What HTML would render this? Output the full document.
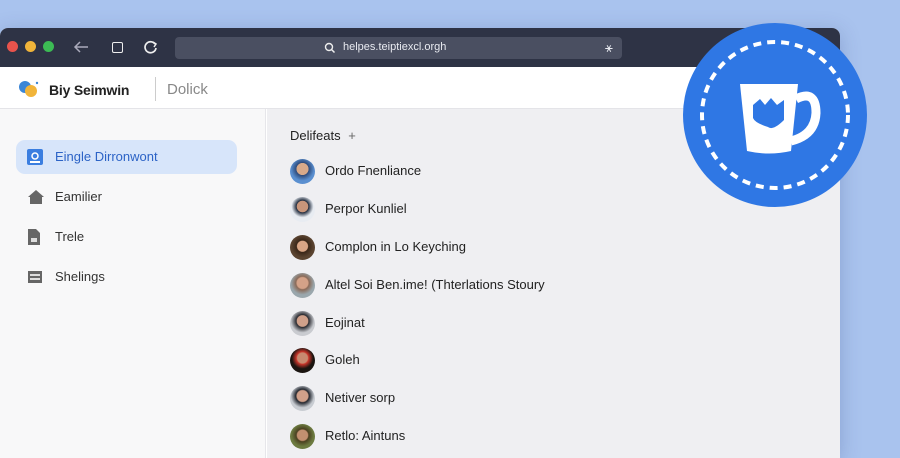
<!DOCTYPE html>
<html><head><style>
*{margin:0;padding:0;box-sizing:border-box}
body{width:900px;height:450px;overflow:hidden;background:#a9c3ee;font-family:"Liberation Sans",sans-serif;position:relative}
.win{position:absolute;left:0;top:28px;width:840px;height:430px;border-radius:8px 8px 0 0;overflow:hidden;background:#fff;box-shadow:0 4px 20px rgba(40,60,120,.25)}
.tb{position:absolute;left:0;top:0;width:840px;height:39px;background:#2e3345}
.dot{position:absolute;top:13px;width:11px;height:11px;border-radius:50%}
.url{position:absolute;left:175px;top:9px;width:447px;height:22px;border-radius:4px;background:#4a4f61;color:#e8eaf0;font-size:11px}
.hdr{position:absolute;left:0;top:39px;width:840px;height:42px;background:#fff;border-bottom:1px solid #e4e4e8}
.side{position:absolute;left:0;top:81px;width:266px;height:360px;background:#f8f8f9;border-right:1px solid #e6e6ea}
.main{position:absolute;left:267px;top:81px;width:573px;height:360px;background:#efeff2}
.nav{position:absolute;left:16px;width:221px;height:34px;border-radius:9px;font-size:13px;color:#333;line-height:34px;padding-left:39px}
.nav svg{position:absolute;left:11px;top:9px}
.row{position:absolute;left:23px;font-size:13px;color:#222;line-height:24px;height:24px}
.av{position:absolute;left:0;top:0;width:25px;height:25px;border-radius:50%;overflow:hidden}
.row span{position:absolute;left:35px;white-space:nowrap}
.badge{position:absolute;left:683px;top:23px;width:184px;height:184px;border-radius:50%;background:#2f77e4}
</style></head><body>
<div class="win">
 <div class="tb">
  <div class="dot" style="left:7px;background:#e9534c"></div>
  <div class="dot" style="left:25px;background:#f0b43a"></div>
  <div class="dot" style="left:43px;background:#3cbb54"></div>
  <svg style="position:absolute;left:73px;top:12px" width="16" height="14"><path d="M15 7H2M7 2L2 7l5 5" stroke="#aab" stroke-width="1.5" fill="none"/></svg>
  <div style="position:absolute;left:112px;top:14px;width:11px;height:11px;border:1.6px solid #eee;border-radius:2px"></div>
  <svg style="position:absolute;left:143px;top:12px" width="15" height="15"><path d="M12 4A5.5 5.5 0 1 0 13 8" stroke="#eee" stroke-width="1.7" fill="none"/><path d="M10 2l3 2-2 3" stroke="#eee" stroke-width="1.5" fill="none"/></svg>
  <div class="url">
   <svg style="position:absolute;left:149px;top:5px" width="12" height="12"><circle cx="5" cy="5" r="3.5" stroke="#eee" stroke-width="1.4" fill="none"/><path d="M7.5 7.5l3 3" stroke="#eee" stroke-width="1.5"/></svg>
   <span style="position:absolute;left:168px;top:4px">helpes.teiptiexcl.orgh</span>
   <span style="position:absolute;left:430px;top:3px;font-size:13px">⚹</span>
  </div>
 </div>
 <div class="hdr">
  <svg style="position:absolute;left:17px;top:12px" width="24" height="20"><circle cx="8" cy="8" r="6" fill="#3b86d6"/><circle cx="14" cy="12" r="6" fill="#f1b43a"/><circle cx="20" cy="4" r="1.2" fill="#3b86d6"/></svg>
  <span style="position:absolute;left:49px;top:15px;font-size:14px;font-weight:bold;color:#222;letter-spacing:-.2px">Biy Seimwin</span>
  <div style="position:absolute;left:155px;top:10px;width:1px;height:24px;background:#ccc"></div>
  <span style="position:absolute;left:167px;top:14px;font-size:15px;color:#888">Dolick</span>
 </div>
 <div class="side">
  <div class="nav" style="top:31px;background:#d7e5fa;color:#2c63c6">
   <svg width="16" height="16"><rect width="16" height="16" rx="2" fill="#3a7ee0"/><circle cx="8" cy="7" r="3" fill="none" stroke="#fff" stroke-width="1.5"/><path d="M3 13h10" stroke="#fff" stroke-width="2"/></svg>Eingle Dirronwont</div>
  <div class="nav" style="top:71px"><svg width="18" height="16"><path d="M9 1L1 8h2v7h12V8h2z" fill="#666"/></svg>Eamilier</div>
  <div class="nav" style="top:111px"><svg width="14" height="16"><path d="M1 0h8l4 4v12H1z" fill="#666"/><rect x="4" y="9" width="6" height="4" fill="#ddd"/></svg>Trele</div>
  <div class="nav" style="top:151px"><svg width="16" height="16"><rect x="1" y="2" width="14" height="12" fill="#666"/><rect x="3" y="5" width="10" height="2" fill="#ddd"/><rect x="3" y="9" width="10" height="2" fill="#ddd"/></svg>Shelings</div>
 </div>
 <div class="main">
  <span style="position:absolute;left:23px;top:19px;font-size:13px;color:#222">Delifeats <span style="color:#666;margin-left:4px">+</span></span>
  <div class="row" style="top:50px"><div class="av" style="background:radial-gradient(circle at 50% 40%,#d7a98a 30%,#2e4a7a 32%,#5a8fd0 60%)"></div><span>Ordo Fnenliance</span></div>
  <div class="row" style="top:88px"><div class="av" style="background:radial-gradient(circle at 50% 38%,#c8957a 28%,#1f2a3c 30%,#e8ecf2 55%)"></div><span>Perpor Kunliel</span></div>
  <div class="row" style="top:126px"><div class="av" style="background:radial-gradient(circle at 50% 45%,#d9a585 28%,#3a2618 32%,#5a4330 60%)"></div><span>Complon in Lo Keyching</span></div>
  <div class="row" style="top:164px"><div class="av" style="background:radial-gradient(circle at 50% 40%,#d4a288 28%,#8a6a58 34%,#9aa7ad 60%)"></div><span>Altel Soi Ben.ime! (Thterlations Stoury</span></div>
  <div class="row" style="top:202px"><div class="av" style="background:radial-gradient(circle at 50% 40%,#d0a08a 28%,#2a2a30 32%,#c9cbd0 60%)"></div><span>Eojinat</span></div>
  <div class="row" style="top:239px"><div class="av" style="background:radial-gradient(circle at 50% 40%,#c88a70 26%,#c8352a 32%,#1a1410 55%)"></div><span>Goleh</span></div>
  <div class="row" style="top:277px"><div class="av" style="background:radial-gradient(circle at 50% 40%,#d0a08a 28%,#22262e 34%,#c8ccd2 60%)"></div><span>Netiver sorp</span></div>
  <div class="row" style="top:315px"><div class="av" style="background:radial-gradient(circle at 50% 45%,#c29070 28%,#4a4020 34%,#6c7a40 60%)"></div><span>Retlo: Aintuns</span></div>
 </div>
</div>
<div class="badge">
 <svg width="184" height="184" style="position:absolute;left:0;top:0">
  <circle cx="92" cy="92" r="73" fill="none" stroke="#fff" stroke-width="4" stroke-dasharray="8 6"/>
  <path d="M57 61 L115 61 L108 128 Q86 133 64 128 Z" fill="#fff"/>
  <path d="M113 76 Q133 66 133 90 Q132 112 108 118" fill="none" stroke="#fff" stroke-width="9"/>
  <path d="M70 82 L77 76 L82 82 L88 75 L94 82 L101 77 L101 97 Q90 108 85 104 Q72 100 70 95 Z" fill="#2f77e4"/>
 </svg>
</div>
</body></html>
